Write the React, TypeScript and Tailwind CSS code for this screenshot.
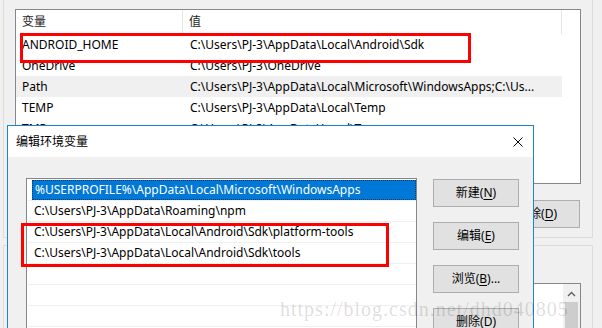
import React from 'react';

const ui = '"Noto Sans", "Noto Sans CJK SC", sans-serif';

const userVars = [
  { name: 'ANDROID_HOME', value: 'C:\\Users\\PJ-3\\AppData\\Local\\Android\\Sdk' },
  { name: 'OneDrive', value: 'C:\\Users\\PJ-3\\OneDrive' },
  { name: 'Path', value: 'C:\\Users\\PJ-3\\AppData\\Local\\Microsoft\\WindowsApps;C:\\Us...', active: true },
  { name: 'TEMP', value: 'C:\\Users\\PJ-3\\AppData\\Local\\Temp' },
  { name: 'TMP', value: 'C:\\Users\\PJ-3\\AppData\\Local\\Temp' },
  { name: '', value: '' },
  { name: '', value: '' },
];

const pathItems = [
  '%USERPROFILE%\\AppData\\Local\\Microsoft\\WindowsApps',
  'C:\\Users\\PJ-3\\AppData\\Roaming\\npm',
  'C:\\Users\\PJ-3\\AppData\\Local\\Android\\Sdk\\platform-tools',
  'C:\\Users\\PJ-3\\AppData\\Local\\Android\\Sdk\\tools',
  '',
  '',
  '',
];

const WinButton: React.FC<{ label: string; hot: string; tail?: string }> = ({ label, hot, tail }) => (
  <div className="w-[86px] h-[28px] shrink-0 flex items-center justify-center bg-[#e1e1e1] border border-[#adadad] text-[12px] text-black">
    {label}(<span className="underline underline-offset-2">{hot}</span>){tail}
  </div>
);

export default function App() {
  return (
    <div className="relative w-[602px] h-[328px] overflow-hidden bg-[#f0f0f0]" style={{ fontFamily: ui }}>
      {/* user variables group */}
      <div className="ml-[3px] w-[590px] h-[238px] border-x border-b border-[#dcdcdc] pl-[11px] pt-[9px]">
        <div className="w-[566px] h-[175px] border border-[#828790] bg-white overflow-hidden">
          <div className="flex h-[24px] text-[12px] text-[#1e1e1e]">
            <div className="w-[167px] pl-[6px] flex items-center border-r border-[#e5e5e5]">变量</div>
            <div className="w-[379px] pl-[6px] flex items-center border-r border-[#e5e5e5]">值</div>
          </div>
          {userVars.map((v, i) => (
            <div
              key={i}
              className={`flex h-[21px] w-[546px] items-center text-[12px] text-black whitespace-nowrap ${v.active ? 'bg-[#f0f0f0]' : ''}`}
            >
              <div className="w-[168px] pl-[6px]">{v.name}</div>
              <div className="pl-[6px]">{v.value}</div>
            </div>
          ))}
        </div>
        <div className="flex justify-end w-[565px] mt-[16px]">
          <WinButton label="删除" hot="D" />
        </div>
      </div>

      {/* system variables group */}
      <div className="ml-[3px] mt-[7px] w-[590px] h-[120px] border-x border-t border-[#dcdcdc] pl-[11px] pt-[37px]">
        <div className="w-[566px] h-[60px] border border-[#828790] bg-white flex justify-end">
          <div className="w-[17px] bg-[#f0f0f0] flex flex-col items-center">
            <svg width="9" height="6" viewBox="0 0 9 6" className="mt-[7px]">
              <path d="M1 5 L4.5 1.5 L8 5" fill="none" stroke="#606060" strokeWidth="1.4" />
            </svg>
            <div className="mt-[5px] w-[13px] flex-1 bg-[#cdcdcd]" />
          </div>
        </div>
      </div>

      {/* edit dialog */}
      <div className="absolute left-[7px] top-[125px] w-[527px] h-[220px] border border-[#1883d7] bg-[#f0f0f0]">
        <div className="h-[31px] bg-white flex items-center justify-between pl-[8px] pr-[10px]">
          <span className="text-[12px] text-black">编辑环境变量</span>
          <svg width="10" height="10" viewBox="0 0 10 10">
            <path d="M0.5 0.5 L9.5 9.5 M9.5 0.5 L0.5 9.5" stroke="#000" strokeWidth="1" />
          </svg>
        </div>
        <div className="flex pl-[18px] pt-[21px] gap-[16px]">
          <div className="w-[391px] h-[200px] border border-[#828790] bg-white pt-[1px]">
            {pathItems.map((p, i) => (
              <div key={i} className="ml-[1px] h-[21px] border-b border-[#f0f0f0] text-[12px] whitespace-nowrap">
                {i === 0 ? (
                  <div className="ml-[4px] h-[20px] bg-[#0078d7] text-white pl-[2px] flex items-center border border-dotted border-[#1c3c64]">
                    {p}
                  </div>
                ) : (
                  <div className="h-[20px] pl-[6px] flex items-center text-black">{p}</div>
                )}
              </div>
            ))}
          </div>
          <div className="flex flex-col gap-[15px] pt-[1px]">
            <WinButton label="新建" hot="N" />
            <WinButton label="编辑" hot="E" />
            <WinButton label="浏览" hot="B" tail="..." />
            <WinButton label="删除" hot="D" />
          </div>
        </div>
      </div>

      {/* red annotation boxes */}
      <div className="absolute left-[20px] top-[33px] w-[451px] h-[30px] border-[3px] border-[#ff0000]" />
      <div className="absolute left-[21px] top-[223px] w-[368px] h-[44px] border-[3px] border-[#ff0000]" />

      {/* watermark */}
      <div
        className="absolute left-[280px] top-[294px] text-[20px] tracking-[1px] text-black/15 whitespace-nowrap pointer-events-none"
        style={{ fontFamily: '"Liberation Serif", serif' }}
      >
        https://blog.csdn.net/dhd040805
      </div>
    </div>
  );
}
